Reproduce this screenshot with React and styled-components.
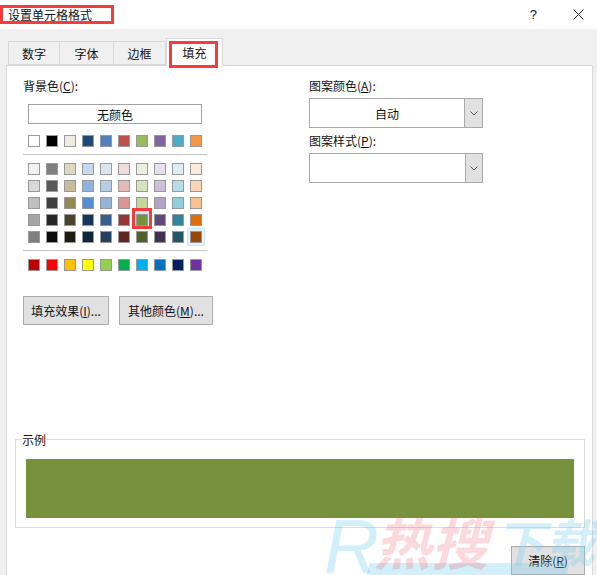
import React from 'react';
import styled, { createGlobalStyle } from 'styled-components';

const GlobalStyle = createGlobalStyle`
  html, body {
    margin: 0;
    padding: 0;
    background: #fff;
  }

  *, *::before, *::after {
    box-sizing: border-box;
  }
`;

const Dialog = styled.div`
  background: #f0f0f0;
  color: #111;
  display: flex;
  flex-direction: column;
  font-family: 'Noto Sans CJK SC', 'Liberation Sans', sans-serif;
  font-size: 12px;
  height: 575px;
  overflow: hidden;
  position: relative;
  width: 597px;
`;

const TitleBar = styled.div`
  align-items: flex-start;
  background: #fff;
  display: flex;
  flex-shrink: 0;
  height: 29px;
  justify-content: space-between;
  padding-top: 5px;
`;

const Title = styled.div`
  border: 3px solid #f43c3c;
  height: 19px;
  line-height: 13px;
  padding-left: 5px;
  width: 114px;
`;

const TitleButtons = styled.div`
  align-items: center;
  display: flex;
  gap: 36px;
  height: 18px;
  margin: 0 13px 0 0;
`;

const HelpMark = styled.span`
  font-family: 'Liberation Sans', sans-serif;
  font-size: 13px;
`;

const TabStrip = styled.div`
  align-items: flex-end;
  display: flex;
  flex-shrink: 0;
  height: 36px;
  padding-left: 8px;
`;

const Tab = styled.div`
  align-items: center;
  background: ${(p) => (p.$active ? '#fff' : '#f0f0f0')};
  border: 1px solid #d9d9d9;
  border-bottom: ${(p) => (p.$active ? 'none' : '1px solid #d9d9d9')};
  border-left: ${(p) => (p.$active || p.$first ? '1px solid #d9d9d9' : 'none')};
  display: flex;
  height: ${(p) => (p.$active ? '28px' : '24px')};
  justify-content: center;
  margin-bottom: ${(p) => (p.$active ? '-1px' : '0')};
  padding-top: ${(p) => (p.$active ? '0' : '1px')};
  position: relative;
  width: ${(p) => p.$width}px;
  z-index: ${(p) => (p.$active ? 2 : 0)};

  ${(p) =>
    p.$marked &&
    `
    &::after {
      border: 3px solid #f43c3c;
      content: '';
      height: 27px;
      left: 2px;
      position: absolute;
      top: 2px;
      width: 49px;
    }
  `}
`;

const Panel = styled.div`
  background: #fff;
  border: 1px solid #d9d9d9;
  border-bottom: none;
  display: flex;
  flex: 1;
  flex-direction: column;
  margin: 0 4px 0 6px;
  padding: 11px 7px 0 8px;
`;

const Columns = styled.div`
  display: grid;
  grid-template-columns: 286px 174px;
  height: 255px;
  padding-left: 8px;
`;

const Column = styled.div`
  display: flex;
  flex-direction: column;
`;

const FieldLabel = styled.div`
  height: 18px;
  line-height: 18px;

  u {
    text-underline-offset: 1px;
  }
`;

const NoColorButton = styled.div`
  align-items: center;
  border: 1px solid #a0a0a0;
  display: flex;
  height: 20px;
  justify-content: center;
  margin: 9px 0 11px 5px;
  width: 174px;
`;

const SwatchGrid = styled.div`
  display: grid;
  grid-auto-rows: 12px;
  grid-template-columns: repeat(10, 12px);
  column-gap: 6px;
  margin-left: 5px;
  row-gap: 5px;
`;

const Divider = styled.div`
  background: #c4c4c4;
  height: 1px;
  margin: 7px 0 8px;
  width: 184px;
`;

const swatchRing = (p) => {
  if (p.$hover) return ', 0 0 0 2px #e5f3ff, 0 0 0 3px #cce8ff';
  if (p.$marked) return ', 0 0 0 3px #cfe8fb';
  return '';
};

const Swatch = styled.div`
  background: ${(p) => p.$color};
  box-shadow: inset 0 0 0 1px #999${swatchRing};
  height: 12px;
  position: relative;
  width: 12px;
  z-index: ${(p) => (p.$hover || p.$marked ? 1 : 0)};

  ${(p) =>
    p.$marked &&
    `
    &::after {
      border: 3px solid #f43c3c;
      content: '';
      height: 21px;
      left: -4px;
      position: absolute;
      top: -6px;
      width: 20px;
    }
  `}
`;

const ButtonRow = styled.div`
  display: flex;
  gap: 10px;
  margin-top: 25px;
`;

const Button = styled.div`
  align-items: center;
  background: #e1e1e1;
  border: 1px solid #adadad;
  display: flex;
  height: 29px;
  justify-content: center;
  width: ${(p) => p.$width}px;
`;

const Combo = styled.div`
  border: 1px solid #a9a9a9;
  display: flex;
  height: 30px;
  margin: 3px 0 4px;
  width: 174px;
`;

const ComboValue = styled.div`
  align-items: center;
  display: flex;
  flex: 1;
  justify-content: center;
`;

const ComboArrow = styled.div`
  align-items: center;
  background: #e1e1e1;
  border-left: 1px solid #a9a9a9;
  display: flex;
  justify-content: center;
  width: ${(p) => p.$width}px;
`;

const SampleGroup = styled.div`
  border: 1px solid #dcdcdc;
  height: 89px;
  margin: 107px 0 0;
  padding: 19px 10px 0;
  position: relative;
`;

const SampleLegend = styled.span`
  background: #fff;
  left: 5px;
  line-height: 14px;
  padding: 0 0 0 1px;
  position: absolute;
  top: -7px;
`;

const SampleFill = styled.div`
  background: #76923c;
  height: 59px;
`;

const Footer = styled.div`
  display: flex;
  justify-content: flex-end;
  margin-top: 18px;
`;

const Watermark = styled.div`
  align-items: flex-start;
  display: flex;
  font-style: italic;
  height: 58px;
  left: 324px;
  pointer-events: none;
  position: absolute;
  top: 517px;
  white-space: nowrap;
  z-index: 5;
`;

const WatermarkLetter = styled.span`
  color: rgba(120, 205, 240, 0.33);
  font-family: 'Liberation Sans', sans-serif;
  font-size: 76px;
  line-height: 60px;
  width: 50px;
`;

const WatermarkWord = styled.span`
  color: ${(p) => p.$color};
  font-family: 'Noto Sans CJK SC', sans-serif;
  font-size: ${(p) => p.$size}px;
  font-weight: 700;
  line-height: 46px;
  margin-left: ${(p) => p.$gap}px;
`;

const WatermarkBand = styled.div`
  background: rgba(120, 205, 240, 0.33);
  height: 12px;
  left: 368px;
  pointer-events: none;
  position: absolute;
  top: 563px;
  transform: skewX(-14deg);
  width: 200px;
  z-index: 4;
`;

const themeRow = ['#ffffff', '#000000', '#eeece1', '#1f497d', '#4f81bd', '#c0504d', '#9bbb59', '#8064a2', '#4bacc6', '#f79646'];

const tintRows = [
  ['#f2f2f2', '#7f7f7f', '#ddd9c3', '#c6d9f0', '#dbe5f1', '#f2dcdb', '#ebf1dd', '#e5e0ec', '#dbeef3', '#fdeada'],
  ['#d8d8d8', '#595959', '#c4bd97', '#8db3e2', '#b8cce4', '#e5b9b7', '#d7e3bc', '#ccc1d9', '#b7dde8', '#fbd5b5'],
  ['#bfbfbf', '#3f3f3f', '#938953', '#548dd4', '#95b3d7', '#d99694', '#c3d69b', '#b2a2c7', '#92cddc', '#fac08f'],
  ['#a5a5a5', '#262626', '#494429', '#17365d', '#366092', '#953734', '#76923c', '#5f497a', '#31859b', '#e36c09'],
  ['#7f7f7f', '#0c0c0c', '#1d1b10', '#0f243e', '#244061', '#632423', '#4f6128', '#3f3151', '#205867', '#974806'],
];

const standardRow = ['#c00000', '#ff0000', '#ffc000', '#ffff00', '#92d050', '#00b050', '#00b0f0', '#0070c0', '#002060', '#7030a0'];

const Chevron = () => (
  <svg width="8" height="5" viewBox="0 0 8 5" fill="none" stroke="#555" strokeWidth="1">
    <path d="M0.5 0.5 L4 4 L7.5 0.5" />
  </svg>
);

const CloseIcon = () => (
  <svg width="11" height="11" viewBox="0 0 11 11" fill="none" stroke="#222" strokeWidth="1">
    <path d="M0.5 0.5 L10.5 10.5 M10.5 0.5 L0.5 10.5" />
  </svg>
);

const App = () => (
  <Dialog>
    <GlobalStyle />
    <TitleBar>
      <Title>设置单元格格式</Title>
      <TitleButtons>
        <HelpMark>?</HelpMark>
        <CloseIcon />
      </TitleButtons>
    </TitleBar>
    <TabStrip>
      <Tab $first $width={52}>数字</Tab>
      <Tab $width={54}>字体</Tab>
      <Tab $width={52}>边框</Tab>
      <Tab $active $marked $width={57}>填充</Tab>
    </TabStrip>
    <Panel>
      <Columns>
        <Column>
          <FieldLabel>背景色(<u>C</u>):</FieldLabel>
          <NoColorButton>无颜色</NoColorButton>
          <SwatchGrid>
            {themeRow.map((color) => (
              <Swatch key={color} $color={color} />
            ))}
          </SwatchGrid>
          <Divider />
          <SwatchGrid>
            {tintRows.flat().map((color, i) => (
              <Swatch key={`${color}-${i}`} $color={color} $marked={color === '#76923c'} $hover={color === '#974806'} />
            ))}
          </SwatchGrid>
          <Divider />
          <SwatchGrid>
            {standardRow.map((color) => (
              <Swatch key={color} $color={color} />
            ))}
          </SwatchGrid>
          <ButtonRow>
            <Button $width={86}>填充效果(<u>I</u>)...</Button>
            <Button $width={94}>其他颜色(<u>M</u>)...</Button>
          </ButtonRow>
        </Column>
        <Column>
          <FieldLabel>图案颜色(<u>A</u>):</FieldLabel>
          <Combo>
            <ComboValue>自动</ComboValue>
            <ComboArrow $width={18}><Chevron /></ComboArrow>
          </Combo>
          <FieldLabel>图案样式(<u>P</u>):</FieldLabel>
          <Combo>
            <ComboValue />
            <ComboArrow $width={17}><Chevron /></ComboArrow>
          </Combo>
        </Column>
      </Columns>
      <SampleGroup>
        <SampleLegend>示例</SampleLegend>
        <SampleFill />
      </SampleGroup>
      <Footer>
        <Button $width={74}>清除(<u>R</u>)</Button>
      </Footer>
    </Panel>
    <WatermarkBand />
    <Watermark>
      <WatermarkLetter>R</WatermarkLetter>
      <WatermarkWord $color="rgba(235, 80, 100, 0.22)" $size={57} $gap={0}>热搜</WatermarkWord>
      <WatermarkWord $color="rgba(120, 205, 240, 0.33)" $size={50} $gap={7}>下载</WatermarkWord>
    </Watermark>
  </Dialog>
);

export default App;
